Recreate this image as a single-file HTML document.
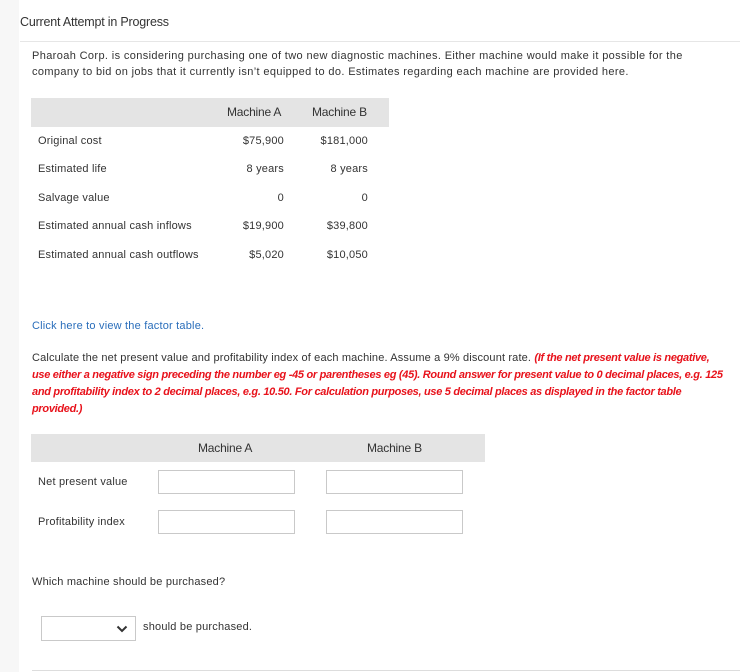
<!DOCTYPE html>
<html><head><style>
body{margin:0;width:752px;height:672px;background:#fff;position:relative;overflow:hidden;font-family:"Liberation Sans",sans-serif;color:#333;}
.a{position:absolute;white-space:nowrap;}
.t{font-size:11px;letter-spacing:0.2px;}
.g{position:absolute;background:#e4e4e4;}
.in{position:absolute;border:1px solid #c9c9c9;background:#fff;box-sizing:border-box;}
.r{text-align:right;}
.red{color:#e8121b;font-style:italic;font-weight:bold;}
.h{font-size:12px;letter-spacing:-0.2px;}
</style></head><body>
<div style="position:absolute;left:0;top:0;width:19px;height:672px;background:#f7f7f7"></div>
<div class="a" style="left:20px;top:15px;font-size:12.5px;color:#333;letter-spacing:-0.2px">Current Attempt in Progress</div>
<div style="position:absolute;left:20px;top:41px;width:720px;height:1px;background:#e6e6e6"></div>
<div class="a" style="left:32px;top:50px;font-size:11px;letter-spacing:0.37px">Pharoah Corp. is considering purchasing one of two new diagnostic machines. Either machine would make it possible for the</div>
<div class="a" style="left:32px;top:66px;font-size:11px;letter-spacing:0.37px">company to bid on jobs that it currently isn’t equipped to do. Estimates regarding each machine are provided here.</div>
<div class="g" style="left:31px;top:98px;width:358px;height:29px"></div>
<div class="a h" style="left:227px;top:105px">Machine A</div>
<div class="a h" style="left:312px;top:105px">Machine B</div>
<div class="a t" style="left:38px;top:135px">Original cost</div>
<div class="a t" style="left:38px;top:163px">Estimated life</div>
<div class="a t" style="left:38px;top:192px">Salvage value</div>
<div class="a t" style="left:38px;top:220px">Estimated annual cash inflows</div>
<div class="a t" style="left:38px;top:249px">Estimated annual cash outflows</div>
<div class="a t r" style="left:200px;width:84px;top:135px">$75,900</div>
<div class="a t r" style="left:200px;width:84px;top:163px">8 years</div>
<div class="a t r" style="left:200px;width:84px;top:192px">0</div>
<div class="a t r" style="left:200px;width:84px;top:220px">$19,900</div>
<div class="a t r" style="left:200px;width:84px;top:249px">$5,020</div>
<div class="a t r" style="left:284px;width:84px;top:135px">$181,000</div>
<div class="a t r" style="left:284px;width:84px;top:163px">8 years</div>
<div class="a t r" style="left:284px;width:84px;top:192px">0</div>
<div class="a t r" style="left:284px;width:84px;top:220px">$39,800</div>
<div class="a t r" style="left:284px;width:84px;top:249px">$10,050</div>
<div class="a t" style="left:32px;top:320px;color:#2a6ebb">Click here to view the factor table.</div>
<div class="a" style="left:32px;top:352px;font-size:11px;letter-spacing:0.15px">Calculate the net present value and profitability index of each machine. Assume a 9% discount rate. <span class="red" style="letter-spacing:-0.3px">(If the net present value is negative,</span></div>
<div class="a red" style="left:32px;top:369px;font-size:11px;letter-spacing:-0.3px">use either a negative sign preceding the number eg -45 or parentheses eg (45). Round answer for present value to 0 decimal places, e.g. 125</div>
<div class="a red" style="left:32px;top:386px;font-size:11px;letter-spacing:-0.3px">and profitability index to 2 decimal places, e.g. 10.50. For calculation purposes, use 5 decimal places as displayed in the factor table</div>
<div class="a red" style="left:32px;top:403px;font-size:11px;letter-spacing:-0.3px">provided.)</div>
<div class="g" style="left:31px;top:434px;width:454px;height:28px"></div>
<div class="a h" style="left:198px;top:441px">Machine A</div>
<div class="a h" style="left:367px;top:441px">Machine B</div>
<div class="a t" style="left:38px;top:476px">Net present value</div>
<div class="a t" style="left:38px;top:516px">Profitability index</div>
<div class="in" style="left:158px;top:470px;width:137px;height:24px"></div>
<div class="in" style="left:326px;top:470px;width:137px;height:24px"></div>
<div class="in" style="left:158px;top:510px;width:137px;height:24px"></div>
<div class="in" style="left:326px;top:510px;width:137px;height:24px"></div>
<div class="a t" style="left:32px;top:576px">Which machine should be purchased?</div>
<div class="in" style="left:41px;top:616px;width:95px;height:25px"></div>
<svg style="position:absolute;left:116px;top:625px" width="12" height="8"><path d="M1.5 1.5 L6 6 L10.5 1.5" fill="none" stroke="#333" stroke-width="2"/></svg>
<div class="a t" style="left:143px;top:621px">should be purchased.</div>
<div style="position:absolute;left:32px;top:670px;width:708px;height:1px;background:#ddd"></div>
</body></html>
